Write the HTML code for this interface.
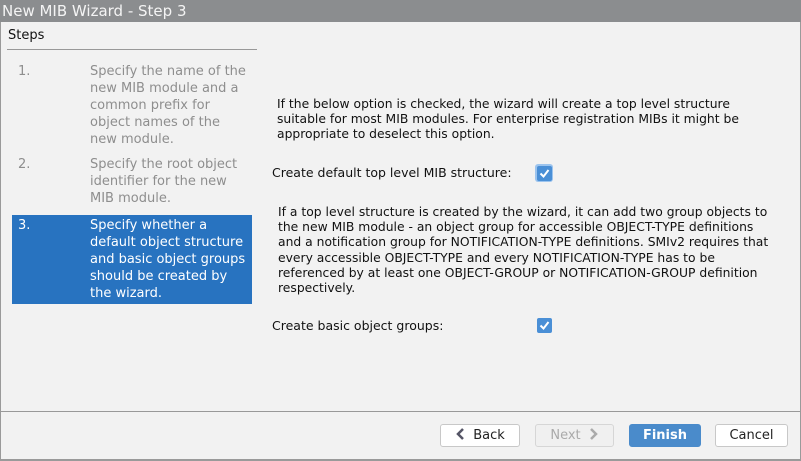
<!DOCTYPE html>
<html><head><style>
*{margin:0;padding:0;box-sizing:border-box}
body{width:801px;height:461px;overflow:hidden;background:#f2f2f2;font-family:"DejaVu Sans","Liberation Sans",sans-serif;position:relative}
.a{position:absolute;white-space:nowrap}
#t{left:0;top:0;width:801px;height:22px;background:#8b8d8f;color:#f4f4f4;font-size:15px;line-height:22px;padding-left:2px}
.s{font-size:13px;line-height:17px;color:#8e8e8e}
.r{font-size:12.35px;line-height:15.2px;color:#111}
.btn{position:absolute;top:424px;height:23px;border:1px solid #c8c8c8;border-radius:3px;background:#fff;font-size:13px;line-height:21px;text-align:center;color:#222}
.cb{position:absolute;width:15px;height:15px;background:#4a8fd6;border-radius:2px}
</style></head><body>
<div class="a" id="t">New MIB Wizard - Step 3</div>
<div class="a" style="left:0;top:22px;width:1px;height:439px;background:#9a9a9a"></div>
<div class="a" style="right:0;top:22px;width:1px;height:439px;background:#9a9a9a"></div>
<div class="a" style="left:0;top:459px;width:801px;height:2px;background:#9a9a9a"></div>
<div class="a" style="left:8px;top:27px;font-size:13px;line-height:17px;color:#111">Steps</div>
<div class="a" style="left:7px;top:49px;width:250px;height:1px;background:#999"></div>
<div class="a s" style="left:18px;top:63px">1.</div>
<div class="a s" style="left:90px;top:63px">Specify the name of the<br>new MIB module and a<br>common prefix for<br>object names of the<br>new module.</div>
<div class="a s" style="left:18px;top:156px">2.</div>
<div class="a s" style="left:90px;top:156px">Specify the root object<br>identifier for the new<br>MIB module.</div>
<div class="a" style="left:12px;top:215px;width:240px;height:89px;background:#2873c0"></div>
<div class="a s" style="left:18px;top:217px;color:#fff">3.</div>
<div class="a s" style="left:90px;top:217px;color:#fff">Specify whether a<br>default object structure<br>and basic object groups<br>should be created by<br>the wizard.</div>
<div class="a r" style="left:277px;top:97px">If the below option is checked, the wizard will create a top level structure<br>suitable for most MIB modules. For enterprise registration MIBs it might be<br>appropriate to deselect this option.</div>
<div class="a r" style="left:272px;top:165px;font-size:12.5px">Create default top level MIB structure:</div>
<div class="a" style="left:535px;top:164px;width:18px;height:18px;background:#9cc4ee;border-radius:3px"></div>
<div class="cb" style="left:537px;top:166px"><svg width="15" height="15"><path d="M3.5 7.5l3 3 5-6.5" stroke="#fff" stroke-width="2" fill="none"/></svg></div>
<div class="a r" style="left:278px;top:205px">If a top level structure is created by the wizard, it can add two group objects to<br>the new MIB module - an object group for accessible OBJECT-TYPE definitions<br>and a notification group for NOTIFICATION-TYPE definitions. SMIv2 requires that<br>every accessible OBJECT-TYPE and every NOTIFICATION-TYPE has to be<br>referenced by at least one OBJECT-GROUP or NOTIFICATION-GROUP definition<br>respectively.</div>
<div class="a r" style="left:272px;top:318px;font-size:12.5px">Create basic object groups:</div>
<div class="cb" style="left:537px;top:318px"><svg width="15" height="15"><path d="M3.5 7.5l3 3 5-6.5" stroke="#fff" stroke-width="2" fill="none"/></svg></div>
<div class="a" style="left:0;top:411px;width:801px;height:1px;background:#999"></div>
<div class="btn" style="left:440px;width:80px"><svg width="12" height="12" style="vertical-align:-1px;margin-right:6px"><path d="M8 1L3 6l5 5" stroke="#556" stroke-width="2.5" fill="none"/></svg>Back</div>
<div class="btn" style="left:535px;width:79px;background:#f0f0f0;color:#aaa;border-color:#d6d6d6">Next<svg width="12" height="12" style="vertical-align:-1px;margin-left:6px"><path d="M4 1l5 5-5 5" stroke="#aaa" stroke-width="2.5" fill="none"/></svg></div>
<div class="btn" style="left:629px;width:72px;background:#4a8bcb;border-color:#4a8bcb;color:#fff;font-weight:bold">Finish</div>
<div class="btn" style="left:715px;width:73px">Cancel</div>
</body></html>
